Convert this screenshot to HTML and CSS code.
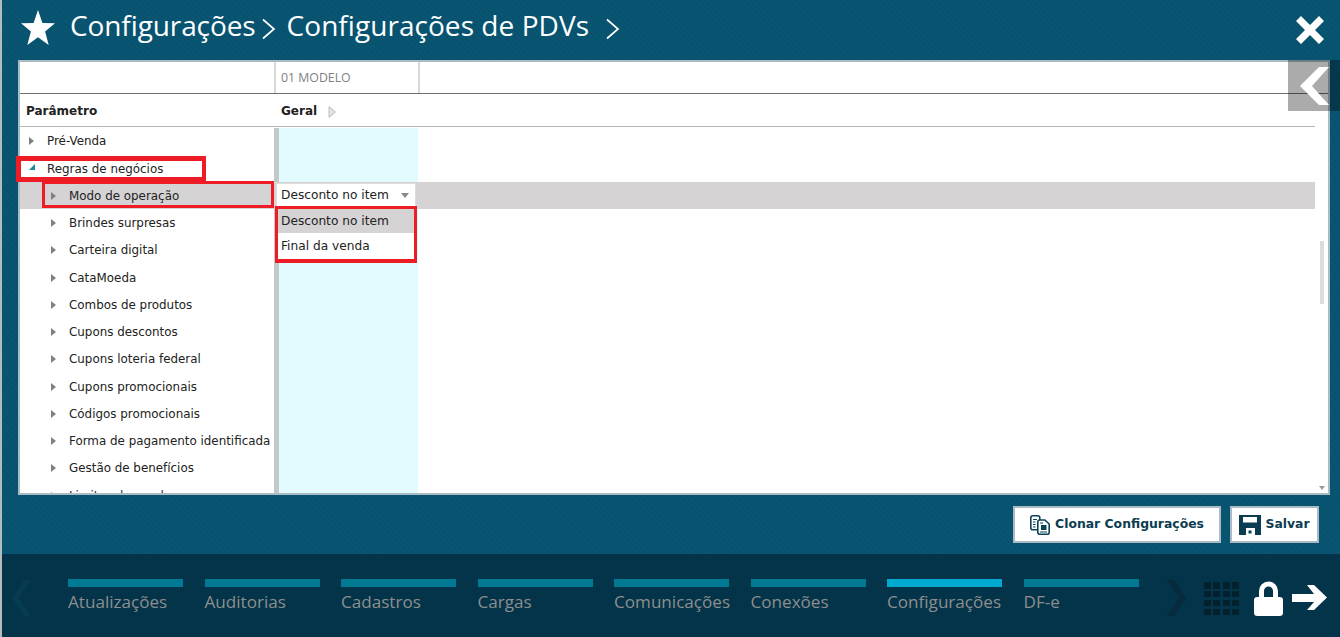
FILE: index.html
```html
<!DOCTYPE html>
<html lang="pt">
<head>
<meta charset="utf-8">
<title>Configurações de PDVs</title>
<link rel="stylesheet" href="styles.css">
</head>
<body>
<div class="app">
  <header class="top">
    <svg class="star" width="34" height="35" viewBox="0 0 34 35"><path d="M17 0l4.400 12.900L34 13.300l-9.900 8.200L27.700 35 17 27.200 6.300 35l3.600-13.500L0 13.300l12.600-.4z" fill="#fff"/></svg>
    <span class="crumb">Configurações</span>
    <svg class="sep" width="15" height="22" viewBox="0 0 15 22"><path d="M2 1.500L13 11 2 20.500" fill="none" stroke="#fff" stroke-width="1.700"/></svg>
    <span class="crumb crumb-last">Configurações de PDVs</span>
    <svg class="sep sep-last" width="15" height="22" viewBox="0 0 15 22"><path d="M2 1.500L13 11 2 20.500" fill="none" stroke="#fff" stroke-width="1.700"/></svg>
    <svg class="close" width="30" height="30" viewBox="0 0 30 30"><path d="M6 1l9 9 9-9 5 5-9 9 9 9-5 5-9-9-9 9-5-5 9-9-9-9z" fill="#fff"/></svg>
  </header>

  <main class="panel">
    <div class="head-a">
      <div class="tree-col"></div>
      <div class="model-col">01 MODELO</div>
      <div class="rest-col"></div>
    </div>
    <div class="head-b">
      <div class="tree-col"><b>Parâmetro</b></div>
      <div class="geral-col"><b>Geral</b><svg class="geral-arrow" width="8" height="12" viewBox="0 0 8 12"><path d="M1 .500L7.500 6 1 11.500z" fill="#e2e2e2" stroke="#bdbdbd"/></svg></div>
    </div>
    <div class="body">
      <div class="rows">
        <div class="row"><div class="cell lvl1"><i class="tri"></i>Pré-Venda</div><div class="val"></div></div>
        <div class="row"><div class="cell lvl1"><i class="tri open"></i>Regras de negócios</div><div class="val"></div></div>
        <div class="row on"><div class="cell lvl2"><i class="tri"></i>Modo de operação</div><div class="val sel"><span>Desconto no item</span><i class="drop"></i></div></div>
        <div class="row"><div class="cell lvl2"><i class="tri"></i>Brindes surpresas</div><div class="val"></div></div>
        <div class="row"><div class="cell lvl2"><i class="tri"></i>Carteira digital</div><div class="val"></div></div>
        <div class="row"><div class="cell lvl2"><i class="tri"></i>CataMoeda</div><div class="val"></div></div>
        <div class="row"><div class="cell lvl2"><i class="tri"></i>Combos de produtos</div><div class="val"></div></div>
        <div class="row"><div class="cell lvl2"><i class="tri"></i>Cupons descontos</div><div class="val"></div></div>
        <div class="row"><div class="cell lvl2"><i class="tri"></i>Cupons loteria federal</div><div class="val"></div></div>
        <div class="row"><div class="cell lvl2"><i class="tri"></i>Cupons promocionais</div><div class="val"></div></div>
        <div class="row"><div class="cell lvl2"><i class="tri"></i>Códigos promocionais</div><div class="val"></div></div>
        <div class="row"><div class="cell lvl2"><i class="tri"></i>Forma de pagamento identificada</div><div class="val"></div></div>
        <div class="row"><div class="cell lvl2"><i class="tri"></i>Gestão de benefícios</div><div class="val"></div></div>
        <div class="row"><div class="cell lvl2"><i class="tri"></i>Limites de vendas</div><div class="val"></div></div>
      </div>

      <div class="menu">
        <div class="opt hot">Desconto no item</div>
        <div class="opt">Final da venda</div>
      </div>
      <div class="mark mark-a"></div>
      <div class="mark mark-b"></div>
      <div class="thumb"></div>
      <i class="scroll-down"></i>
    </div>
  </main>

  <div class="back-tab">
    <svg width="29" height="38" viewBox="0 0 29 38"><path d="M19 0h10L12 19l17 19H19L0 19z" fill="#fff"/></svg>
  </div>

  <div class="actions">
    <button class="btn btn-clone">
      <svg width="20" height="20" viewBox="0 0 20 20"><g fill="#fff" stroke="#0b4256" stroke-width="1.600"><path d="M.8 2.800q0-2 2-2h5q2 0 2 2v10q0 2-2 2h-5q-2 0-2-2z"/><path d="M7.800 7q0-2 2-2h5l4.400 4v8.200q0 2-2 2H9.800q-2 0-2-2z"/></g><path d="M3 4.500h4M3 7h2.500M3 9.500h2.500M3 12h2.500M10 8h3M10 17h7" stroke="#0b4256" stroke-width="1.200"/><rect x="11" y="10" width="5.500" height="5" fill="#0b4256"/></svg>
      <span class="btn-label">Clonar Configurações</span>
    </button>
    <button class="btn btn-save">
      <svg width="22" height="20" viewBox="0 0 22 20"><path fill-rule="evenodd" d="M0 0h22v20H0zM4 2v5.500h14V2zM7 13v7h9v-7zM9.500 15.500h3v3h-3z" fill="#0b3c52"/></svg>
      <span class="btn-label">Salvar</span>
    </button>
  </div>

  <footer class="dock">
    <svg class="dock-arrow" width="20" height="36" viewBox="0 0 20 36"><path d="M19 0L7 18l12 18h-7L0 18 12 0z" fill="#063b51"/></svg>
    <nav class="tabs">
      <a class="tab"><span class="bar"></span>Atualizações</a>
      <a class="tab"><span class="bar"></span>Auditorias</a>
      <a class="tab"><span class="bar"></span>Cadastros</a>
      <a class="tab"><span class="bar"></span>Cargas</a>
      <a class="tab"><span class="bar"></span>Comunicações</a>
      <a class="tab"><span class="bar"></span>Conexões</a>
      <a class="tab active"><span class="bar"></span>Configurações</a>
      <a class="tab"><span class="bar"></span>DF-e</a>
    </nav>
    <svg class="dock-arrow next" width="20" height="36" viewBox="0 0 20 36"><path d="M1 0l12 18L1 36h7l12-18L8 0z" fill="#052b3d"/></svg>
    <div class="grid-ico"><i></i><i></i><i></i><i></i><i></i><i></i><i></i><i></i><i></i><i></i><i></i><i></i><i></i><i></i><i></i><i></i></div>
    <svg class="lock" width="29" height="35" viewBox="0 0 29 35"><path fill-rule="evenodd" d="M5 16V10a9.500 9.500 0 0 1 19 0v6h1.500Q29 16 29 19v13q0 3-3.500 3h-22Q0 35 0 32V19Q0 16 3.500 16zM10 16h9V10a4.500 4.500 0 0 0-9 0z" fill="#fff"/></svg>
    <svg class="go" width="35" height="25" viewBox="0 0 35 25"><path d="M0 9h22L15 0h7l13 12.500L22 25h-7l7-8H0z" fill="#fff"/></svg>
  </footer>
</div>
</body>
</html>
```
FILE: styles.css
```css
* { box-sizing: border-box; }
html, body { margin: 0; height: 100%; overflow: hidden; }
body { font-family: "DejaVu Sans", Verdana, sans-serif; font-size: 11.9px; color: #222; background: #075370; }

.app {
  position: relative;
  height: 637px;
  border-left: 2px solid #b4bcc0;
  display: flex;
  flex-direction: column;
  background: #075370 repeating-linear-gradient(45deg, rgba(255,255,255,.012) 0 2px, rgba(0,0,0,.012) 2px 4px);
}

.top {
  height: 60px;
  flex: none;
  display: flex;
  align-items: center;
  padding-left: 19px;
  color: #fff;
  font-family: "Open Sans", sans-serif;
  font-size: 28px;
}
.star { margin-right: 15px; margin-top: -5px; }
.crumb { margin-top: -10px; letter-spacing: -.1px; }
.crumb-last { letter-spacing: .05px; margin-left: -1px; }
.sep { margin: -3px 12px 0 5px; }
.sep-last { margin-left: 16px; }
.close { margin-left: auto; margin-right: 15px; }

.panel {
  flex: none;
  height: 435px;
  margin-left: 16px;
  width: 1312px;
  background: #fff;
  border: 2px solid #a9bcc6;
  display: flex;
  flex-direction: column;
}
.head-a {
  height: 32px;
  flex: none;
  display: flex;
  border-bottom: 1px solid #6e6e6e;
}
.tree-col { width: 254px; flex: none; }
.model-col {
  width: 146px;
  flex: none;
  border-left: 2px solid #d8d8d8;
  border-right: 2px solid #d8d8d8;
  padding: 7px 0 0 5px;
  font-family: "Open Sans", sans-serif;
  font-size: 12.3px;
  color: #808080;
}
.rest-col { flex: 1; }
.head-b {
  height: 33px;
  flex: none;
  display: flex;
  align-items: center;
  padding-top: 2px;
  border-bottom: 1px solid #b5b5b5;
  margin-right: 13px;
}
.head-b .tree-col { padding-left: 6px; }
.geral-col { padding-left: 7px; display: flex; align-items: center; }
.geral-arrow { margin-left: 11px; margin-top: 2px; }
b { color: #222; font-size: 12px; }

.body { position: relative; flex: 1; min-height: 0; }
.rows { height: 100%; overflow: hidden; padding-top: .7px; }
.row { height: 27.25px; display: flex; margin-right: 13px; }
.cell {
  width: 254px;
  flex: none;
  display: flex;
  align-items: center;
  white-space: nowrap;
}
.lvl1 { padding-left: 9px; }
.lvl2 { padding-left: 31px; }
.tri {
  width: 0; height: 0;
  margin-right: 13px;
  border-left: 5px solid #808080;
  border-top: 4px solid transparent;
  border-bottom: 4px solid transparent;
}
.tri.open {
  border-left: 6px solid transparent;
  border-top: 0;
  border-bottom: 6px solid #1a8a9c;
  margin-right: 12px;
  margin-top: -4px;
}
.val {
  width: 144px;
  flex: none;
  border-left: 5px solid #c4c8c8;
  background: #e2fbfe;
}
.row.on { background: #d5d3d4; }
.val.sel {
  background: #fff;
  margin-left: 2px;
  width: 140px;
  margin-top: 1px;
  margin-bottom: 1px;
  display: flex;
  align-items: center;
  justify-content: space-between;
  padding: 0 6px 2px 4px;
  border: 1px solid #ddd;
  border-bottom: 0;
  font-size: 12.2px;
}
.drop {
  width: 0; height: 0;
  border-top: 5px solid #8a8a8a;
  border-left: 4px solid transparent;
  border-right: 4px solid transparent;
}

.menu {
  position: absolute;
  left: 255px;
  top: 79px;
  width: 142px;
  height: 57px;
  border: 3px solid #ee1c25;
  border-bottom-width: 4px;
  background: #fff;
  font-size: 12.2px;
}
.opt { height: 26px; display: flex; align-items: center; padding-left: 3px; }
.opt.hot { height: 24px; background: #d5d3d4; }

.mark { position: absolute; border: 3px solid #ee1c25; }
.mark-a { left: -4px; top: 29px; width: 190px; height: 26px; border-width: 5px 4px 5px 5px; }
.mark-b { left: 22px; top: 54px; width: 232px; height: 27px; }

.thumb { position: absolute; left: 1300px; top: 114px; width: 4px; height: 63px; background: #dcdcdc; }
.scroll-down {
  position: absolute; left: 1299px; bottom: 3px; width: 0; height: 0;
  border-top: 4px solid #999;
  border-left: 3px solid transparent;
  border-right: 3px solid transparent;
}

.back-tab {
  position: absolute;
  left: 1286px;
  top: 60px;
  width: 52px;
  height: 51px;
  display: flex;
  align-items: center;
  padding-left: 12px;
  background: rgba(0, 0, 0, .33);
}

.actions {
  flex: 1;
  display: flex;
  justify-content: flex-end;
  align-items: flex-start;
  gap: 9px;
  padding: 11px 21px 0 0;
}
.btn {
  height: 37px;
  background: #fff;
  border: 2px solid #a9bcc6;
  display: flex;
  align-items: center;
  justify-content: center;
  font-family: "DejaVu Sans", Verdana, sans-serif;
  font-size: 12.4px;
  font-weight: 700;
  color: #0b3c52;
  padding: 0;
}
.btn-label { padding-bottom: 2px; }
.btn-clone { width: 208px; gap: 5px; }
.btn-save { width: 89px; gap: 4px; }

.dock {
  height: 83px;
  flex: none;
  background: #033449;
  display: flex;
  align-items: flex-start;
  padding-left: 10px;
}
.dock-arrow { margin-top: 26px; flex: none; }
.tabs { display: flex; gap: 21.5px; margin-left: 36px; padding-top: 25px; width: 1070px; flex: none; }
.tab {
  width: 115px;
  flex: none;
  font-family: "Open Sans", sans-serif;
  font-size: 17.1px;
  line-height: 22px;
  color: #8e8e8e;
  white-space: nowrap;
}
.bar { display: block; height: 8px; background: #007a93; margin-bottom: 4px; }
.tab.active .bar { background: #00a9d1; }
.next { margin-left: 28px; margin-right: 18px; }
.grid-ico {
  margin-top: 28px;
  width: 35px;
  display: grid;
  grid-template-columns: repeat(4, 7px);
  grid-auto-rows: 6.500px;
  gap: 2.400px;
  flex: none;
}
.grid-ico i { background: #02202e; }
.lock { margin: 27px 0 0 15px; flex: none; }
.go { margin: 31px 0 0 9px; flex: none; }
```
